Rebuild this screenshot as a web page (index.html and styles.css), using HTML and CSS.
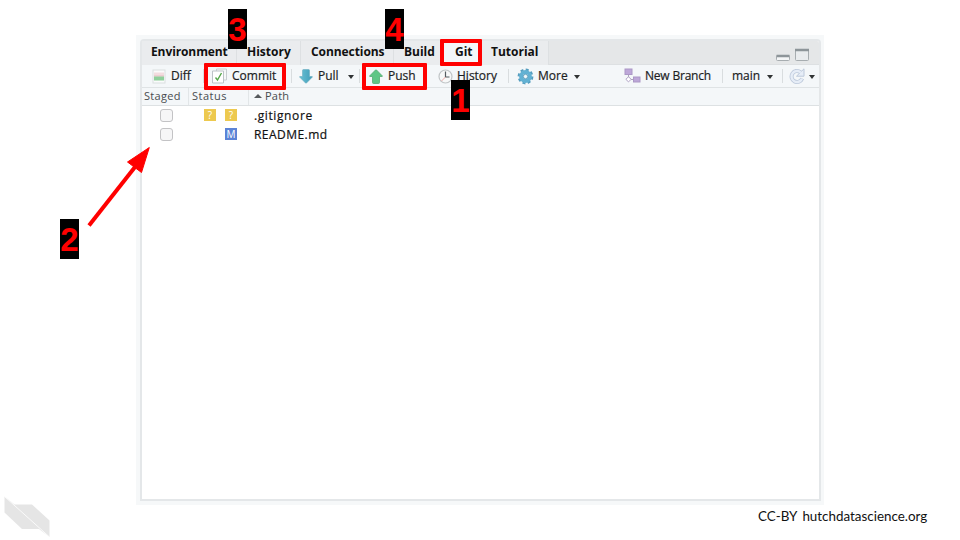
FILE: index.html
```
<!DOCTYPE html>
<html lang="en">
<head>
<meta charset="utf-8">
<title>Git pane</title>
<link rel="stylesheet" href="styles.css">
</head>
<body>
<main class="slide">
  <section class="frame">
    <div class="pane">
      <nav class="tabs">
        <span class="tab env"><b>Environment</b></span>
        <span class="tab hist"><b>History</b></span>
        <span class="tab conn"><b>Connections</b></span>
        <span class="tab build"><b>Build</b></span>
        <span class="tab git"><b>Git</b></span>
        <span class="tab tut"><b>Tutorial</b></span>
        <span class="window-buttons">
          <svg width="36" height="16" viewBox="0 0 36 16"><rect x="1.500" y="8.500" width="13" height="5" rx="1" fill="#f4f6f7" stroke="#a7adb0"/><path d="M1.500 9h13" stroke="#8d9599" stroke-width="2.400"/><rect x="20.500" y="2.500" width="13" height="11" rx="1" fill="#e9ecee" stroke="#a7adb0"/><path d="M20 3h14" stroke="#8d9599" stroke-width="2.600"/></svg>
        </span>
      </nav>
      <div class="toolbar">
        <div class="item diff">
          <svg width="14" height="15" viewBox="0 0 14 15"><rect x="1" y="1" width="12" height="13" fill="#fafbfb" stroke="#dadfe0"/><path d="M2 5h10" stroke="#f3dcdf" stroke-width="3"/><path d="M2 7h10" stroke="#e0aeb2"/><path d="M2 9.500h10" stroke="#8fd09b" stroke-width="4"/></svg>
          <span class="label">Diff</span>
        </div>
        <div class="item commit sep">
          <svg width="17" height="16" viewBox="0 0 17 16"><path d="M5.500 1h10v11h-10z" fill="#f5f7f8" stroke="#c9ced2"/><path d="M1.500 3h11v12h-11z" fill="#fff" stroke="#bcc3c7"/><path d="M4.500 9.500l2 2.500 4-7" fill="none" stroke="#55a84b" stroke-width="1.400"/></svg>
          <span class="label">Commit</span>
        </div>
        <div class="item pull sep">
          <svg width="14" height="15" viewBox="0 0 14 15"><defs><linearGradient id="pullFill" x2="1"><stop stop-color="#67c0d4"/><stop offset="1" stop-color="#429db8"/></linearGradient></defs><path d="M3.500 1.500q0-1 1-1h5q1 0 1 1v6h2.500q.7 0 .2.700L7.500 14q-.5.500-1 0L.8 8.200q-.5-.7.200-.7h2.500z" fill="url(#pullFill)" stroke="#69adc0" stroke-width=".6"/></svg>
          <span class="label">Pull</span><i class="caret"></i>
        </div>
        <div class="item push sep">
          <svg width="14" height="15" viewBox="0 0 14 15"><path d="M3.500 13.500q0 1 1 1h5q1 0 1-1v-6h2.500q.7 0 .2-.7L7.500 1q-.5-.5-1 0L.8 6.800q-.5.700.2.700h2.500z" fill="#5fc685" stroke="#55ac72" stroke-width=".8"/></svg>
          <span class="label">Push</span>
        </div>
        <div class="item log">
          <svg width="15" height="15" viewBox="0 0 15 15"><circle cx="7.500" cy="7.500" r="6.500" fill="#f7f8f8" stroke="#c1c5c7" stroke-width="1.200"/><path d="M7.500 2.500v5.500h4" fill="none" stroke="#555c60" stroke-width="1.200"/><path d="M7.500 8l-4 4" stroke="#eba9a5"/></svg>
          <span class="label">History</span>
        </div>
        <div class="item more sep">
          <svg width="17" height="17" viewBox="0 0 17 17"><circle cx="8.500" cy="8.500" r="6.800" fill="none" stroke="#559dbf" stroke-width="2.200" stroke-dasharray="3 2.340"/><circle cx="8.500" cy="8.500" r="4.400" fill="none" stroke="#62b1d3" stroke-width="4"/><circle cx="8.500" cy="8.500" r="2.200" fill="#eef6f9" stroke="#4b91b2" stroke-width=".8"/></svg>
          <span class="label">More</span><i class="caret"></i>
        </div>
        <div class="item branch">
          <svg width="17" height="16" viewBox="0 0 17 16"><path d="M4.500 6v4M7 11.500h2" stroke="#a9a4b7"/><rect x="1" y="1" width="7" height="5.500" fill="#bda7d8" stroke="#ab98c6"/><path d="M4.500 8.700l2.600 2.600-2.600 2.600-2.600-2.600z" fill="#fff" stroke="#b0a2c5"/><rect x="9.500" y="9" width="6.500" height="5" fill="#bda7d8" stroke="#ab98c6"/></svg>
          <span class="label">New Branch</span>
        </div>
        <div class="item main sep"><span class="label">main</span><i class="caret"></i></div>
        <div class="item refresh sep">
          <svg width="16" height="16" viewBox="0 0 16 16"><path d="M11.500 4.200A5.500 5.500 0 1 0 13.200 10.500" fill="none" stroke="#bcc8da" stroke-width="4"/><path d="M15 .8v7.400H7.500z" fill="#e6edf7" stroke="#bcc8da"/><path d="M11.800 4.500A5.500 5.500 0 1 0 13 10.800" fill="none" stroke="#e6edf7" stroke-width="2.400"/></svg>
          <i class="caret"></i>
        </div>
      </div>
      <div class="row head"><span class="staged">Staged</span><span class="status">Status</span><span class="path"><i class="sort"></i><span>Path</span></span></div>
      <div class="row file"><span class="staged"><i class="box"></i></span><span class="status"><em class="badge unknown">?</em><em class="badge unknown">?</em></span><span class="name ignore">.gitignore</span></div>
      <div class="row file"><span class="staged"><i class="box"></i></span><span class="status"><em class="badge modified">M</em></span><span class="name readme">README.md</span></div>
    </div>
  </section>
  <div class="outline o-commit"></div>
  <div class="outline o-push"></div>
  <div class="outline o-git"></div>
  <div class="step s1">1</div>
  <div class="step s2">2</div>
  <div class="step s3">3</div>
  <div class="step s4">4</div>
  <svg class="arrow" width="70" height="86" viewBox="0 0 70 86"><path d="M4 80.500L50 22" stroke="#f00" stroke-width="4"/><path d="M64.300 2.500L42.500 17 56.500 27.500z" fill="#f00" stroke="#f00"/></svg>
  <svg class="logo" width="48" height="44" viewBox="0 0 48 44"><path d="M.5.500L10.500 8.500H28L45.500 24.500V41L35 33H18L.5 16.500z" fill="#e5e5e5"/><path d="M.5.500L45.500 41" stroke="#fff" stroke-width=".8"/></svg>
  <footer class="credit"><span>CC-BY</span><span class="site">hutchdatascience.org</span></footer>
</main>
</body>
</html>
```
FILE: styles.css
```
* { box-sizing: border-box; }
body { margin: 0; background: #fff; }
.slide { position: relative; width: 960px; height: 540px; overflow: hidden; padding: 35px 0 0 136px; font: 500 12px/16px "Open Sans", sans-serif; color: #1c1e1f; }
.frame { width: 688px; height: 470px; padding: 4px 3px 4px 4px; background: #f6f8f9; }
.pane { height: 462px; border: 2px solid #e4e7e9; border-radius: 4px 4px 0 0; background: #fff; overflow: hidden; }
.tabs { display: flex; height: 24px; background: #e5e7e8; border-bottom: 1px solid #dde0e2; }
.tab { height: 24px; padding: 3px 0 0 10px; background: #eaecee; border-right: 1px solid #dde0e2; white-space: nowrap; }
.tab b { font-weight: 700; font-size: 12px; color: #111; }
.env { width: 95px; padding-left: 9px; letter-spacing: -.1px; }
.hist { width: 64px; }
.conn { width: 93px; letter-spacing: -.07px; }
.build { width: 49px; }
.git { width: 38px; padding-left: 12px; background: #f4f7f9; }
.tut { width: 68px; }
.window-buttons { margin-left: auto; padding: 6px 8px 0 0; }
.window-buttons svg { display: block; }
.toolbar { display: flex; height: 23px; background: #f4f7f9; border-bottom: 1px solid #dfe3e5; }
.item { position: relative; display: flex; align-items: center; height: 22px; white-space: nowrap; }
.item svg { flex: none; margin-right: 4px; }
.label, .name { -webkit-text-stroke: .2px currentColor; }
.sep { background: linear-gradient(#d9dddf, #d9dddf) 0 4px / 1px 14px no-repeat; }
.diff { width: 61px; padding-left: 10px; }
.diff svg { margin-right: 5px; }
.commit { width: 88px; padding-left: 8px; }
.pull { width: 68px; padding-left: 8px; }
.pull svg, .push svg { margin-right: 5px; }
.push { width: 79px; padding-left: 10px; }
.log { width: 70px; }
.more { width: 116px; padding-left: 9px; }
.branch { width: 98px; letter-spacing: -.2px; }
.main { width: 60px; padding-left: 10px; }
.refresh { width: 37px; padding-left: 7px; }
.caret { flex: none; width: 0; border: 3px solid transparent; border-top: 4px solid #303334; border-bottom: 0; margin: 2px 0 0 9px; }
.more .caret { margin-left: 6px; }
.main .caret { margin-left: 7px; }
.refresh .caret { margin-left: 0; }
.row { display: flex; height: 19px; }
.head { height: 18px; background: #f4f7f9; border-bottom: 1px solid #dde1e3; color: #484c4f; font-size: 11px; line-height: 16px; letter-spacing: .3px; }
.staged { width: 47px; padding-left: 2px; }
.status { width: 60px; padding-left: 3px; }
.head .staged { border-right: 1px solid #e2e6e8; }
.head .status { border-right: 1px solid #e2e6e8; letter-spacing: .5px; }
.path { display: flex; height: 16px; align-items: center; gap: 3px; padding-left: 5px; letter-spacing: .2px; }
.sort { width: 0; border: 4px solid transparent; border-bottom: 4px solid #55595c; border-top: 0; }
.file { align-items: center; color: #111; }
.file .staged { padding-left: 18px; }
.box { display: block; width: 13px; height: 13px; border: 1.500px solid #c3c3c5; border-radius: 3px; background: #f6f6f7; }
.file .status { display: flex; justify-content: flex-end; gap: 9px; padding-right: 12px; }
.badge { width: 12px; height: 12px; margin-top: -1px; font: 10px/12px "Open Sans", sans-serif; text-align: center; color: #fff; }
.unknown { background: #edc94f; }
.modified { background: #5c83d6; }
.name { padding-left: 5px; line-height: 18px; }
.ignore { letter-spacing: .6px; }
.readme { letter-spacing: .45px; }
.outline { position: absolute; border: 4px solid #f00; border-radius: 1px; }
.o-commit { left: 204px; top: 63px; width: 82px; height: 27px; }
.o-push { left: 362px; top: 63px; width: 65px; height: 27px; }
.o-git { left: 440px; top: 39px; width: 42px; height: 27px; }
.step { position: absolute; width: 19px; height: 40px; background: #000; color: #f00; font: bold 33px/41px "Liberation Sans", Arial, sans-serif; display: flex; justify-content: center; }
.s1 { left: 451px; top: 80px; }
.s2 { left: 60px; top: 219px; }
.s3 { left: 228px; top: 9px; }
.s4 { left: 385px; top: 9px; }
.arrow { position: absolute; left: 85px; top: 145px; }
.logo { position: absolute; left: 4px; top: 496px; }
.credit { position: absolute; left: 758px; top: 507px; display: flex; gap: 5px; font: 13.400px/18px Lato, sans-serif; color: #111; }
```
